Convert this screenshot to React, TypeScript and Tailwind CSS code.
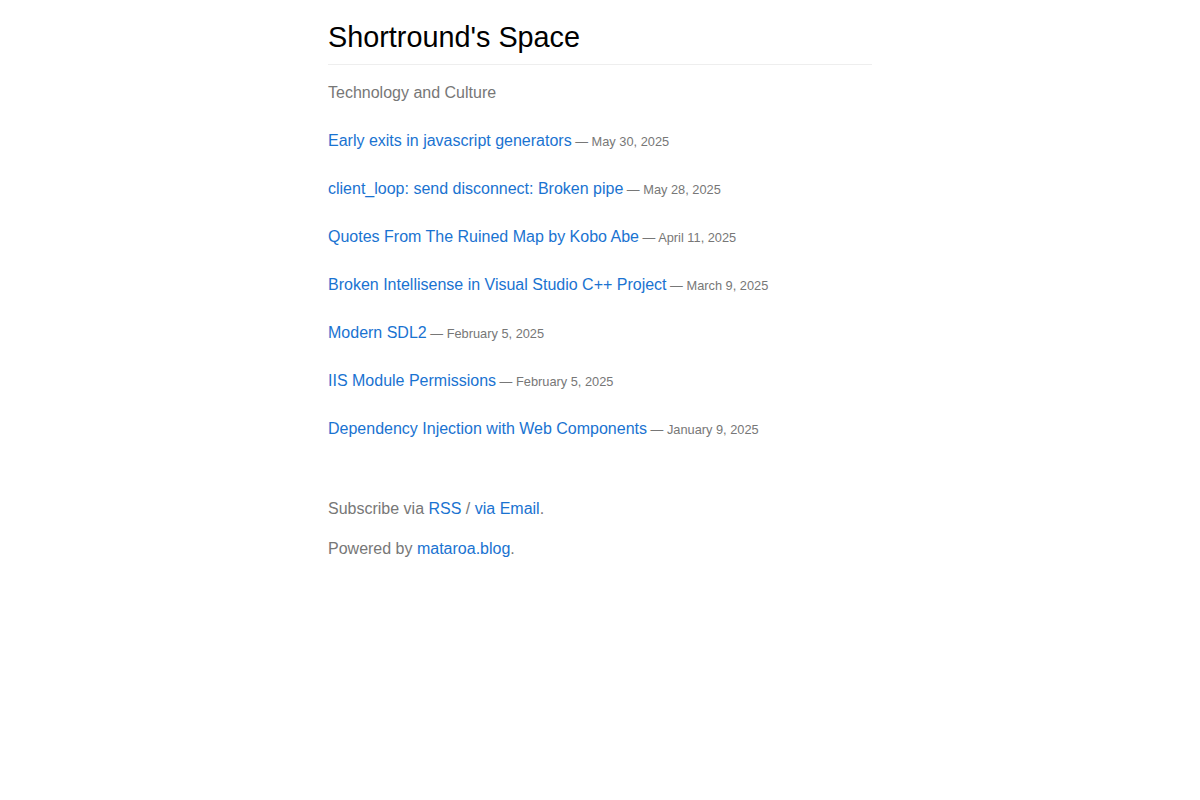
const posts = [
  { title: 'Early exits in javascript generators', date: 'May 30, 2025' },
  { title: 'client_loop: send disconnect: Broken pipe', date: 'May 28, 2025' },
  { title: 'Quotes From The Ruined Map by Kobo Abe', date: 'April 11, 2025' },
  { title: 'Broken Intellisense in Visual Studio C++ Project', date: 'March 9, 2025' },
  { title: 'Modern SDL2', date: 'February 5, 2025' },
  { title: 'IIS Module Permissions', date: 'February 5, 2025' },
  { title: 'Dependency Injection with Web Components', date: 'January 9, 2025' },
];

export default function App() {
  return (
    <div className="min-h-[800px] bg-white font-['Liberation_Sans',Arial,sans-serif]">
      <div className="mx-auto w-[544px]">
        <header className="pt-[17px] pb-[7px] border-b border-[#eeeeee]">
          <h1 className="text-[28.8px] leading-[40px] text-black">Shortround's Space</h1>
        </header>
        <p className="mt-[16px] text-[16px] leading-[24px] text-[#777777]">Technology and Culture</p>
        <ul className="mt-[24px] flex flex-col gap-[24px]">
          {posts.map((p) => (
            <li key={p.title} className="h-[24px] text-[16px] leading-[24px]">
              <a href="#" className="text-[#1a73d1]">{p.title}</a>
              <span className="text-[12.8px] leading-none text-[#777777]"> — {p.date}</span>
            </li>
          ))}
        </ul>
        <footer className="mt-[56px] flex flex-col gap-[16px] text-[16px] leading-[24px] text-[#777777]">
          <p>
            Subscribe via <a href="#" className="text-[#1a73d1]">RSS</a> /{' '}
            <a href="#" className="text-[#1a73d1]">via Email</a>.
          </p>
          <p>
            Powered by <a href="#" className="text-[#1a73d1]">mataroa.blog</a>.
          </p>
        </footer>
      </div>
    </div>
  );
}
